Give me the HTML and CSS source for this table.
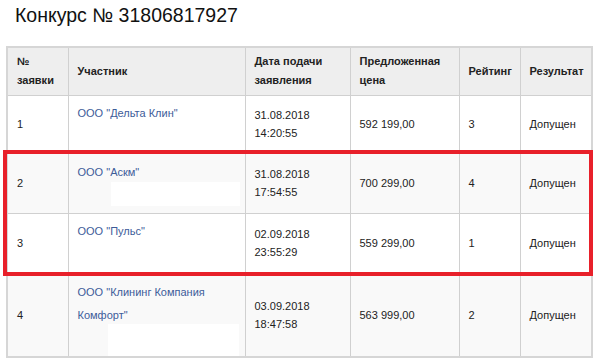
FILE: index.html
```html
<!DOCTYPE html>
<html lang="ru">
<head>
<meta charset="utf-8">
<link rel="stylesheet" href="styles.css">
</head>
<body>
<div class="page">
  <h1 class="title">Конкурс № 31806817927</h1>
  <div class="table-wrap">
    <table class="bids">
      <colgroup>
        <col class="c-num"><col class="c-party"><col class="c-date"><col class="c-price"><col class="c-rate"><col class="c-res">
      </colgroup>
      <thead>
        <tr class="r-head">
          <th>№<br>заявки</th>
          <th>Участник</th>
          <th>Дата подачи<br>заявления</th>
          <th>Предложенная<br>цена</th>
          <th>Рейтинг</th>
          <th>Результат</th>
        </tr>
      </thead>
      <tbody>
        <tr class="r1">
          <td>1</td>
          <td class="party"><a href="#">ООО "Дельта Клин"</a></td>
          <td>31.08.2018<br>14:20:55</td>
          <td>592 199,00</td>
          <td>3</td>
          <td>Допущен</td>
        </tr>
        <tr class="r2 odd">
          <td>2</td>
          <td class="party"><a href="#">ООО "Аскм"</a><div class="blank b2"></div></td>
          <td>31.08.2018<br>17:54:55</td>
          <td>700 299,00</td>
          <td>4</td>
          <td>Допущен</td>
        </tr>
        <tr class="r3">
          <td>3</td>
          <td class="party"><a href="#">ООО "Пульс"</a></td>
          <td>02.09.2018<br>23:55:29</td>
          <td>559 299,00</td>
          <td>1</td>
          <td>Допущен</td>
        </tr>
        <tr class="r4 odd">
          <td>4</td>
          <td class="party"><a href="#">ООО "Клининг Компания Комфорт"</a><div class="blank b4"></div></td>
          <td>03.09.2018<br>18:47:58</td>
          <td>563 999,00</td>
          <td>2</td>
          <td>Допущен</td>
        </tr>
      </tbody>
    </table>
    <div class="highlight"></div>
  </div>
</div>
</body>
</html>
```

FILE: styles.css
```css
html, body {
  margin: 0;
  padding: 0;
  background: #fff;
}
body {
  font-family: "Liberation Sans", Arial, sans-serif;
  color: #222;
}
.page {
  padding: 3px 0 0 6px;
  width: 585px;
}
.title {
  margin: 0 0 19px 9px;
  font-size: 19.5px;
  line-height: 24px;
  font-weight: normal;
  color: #111;
}
.table-wrap {
  position: relative;
}
.bids {
  border-collapse: collapse;
  width: 585px;
  table-layout: fixed;
  font-size: 11px;
  line-height: 18px;
  border: 2px solid #d6d6d6;
}
.c-num { width: 61px; }
.c-party { width: 177px; }
.c-date { width: 105px; }
.c-price { width: 109px; }
.c-rate { width: 61px; }
.c-res { width: 72px; }
.bids th, .bids td {
  border: 1px solid #d0d0d0;
  padding: 0 9px;
  text-align: left;
  vertical-align: middle;
}
.bids th {
  background: #eeeeee;
  font-weight: bold;
  line-height: 19px;
}
.r-head { height: 48px; }
.r1 { height: 57px; }
.r2 { height: 61px; }
.r3 { height: 60px; }
.r4 { height: 82px; }
.odd td { background: #f9f9f9; }
.bids td.party {
  vertical-align: top;
  padding-top: 8px;
  line-height: 18px;
}
.r2 td.party { padding-top: 10px; }
.r4 td.party { padding-top: 7px; line-height: 23px; }
.party a {
  color: #3d5c99;
  text-decoration: none;
}
.blank {
  background: #fff;
}
.b2 {
  margin: 1px 0 0 33px;
  width: 129px;
  height: 24px;
}
.b4 {
  margin: -3px 0 0 30px;
  width: 131px;
  height: 32px;
}
.highlight {
  position: absolute;
  left: -3px;
  top: 104px;
  width: 582px;
  height: 118px;
  border: 4px solid #e8202a;
  pointer-events: none;
}
```
